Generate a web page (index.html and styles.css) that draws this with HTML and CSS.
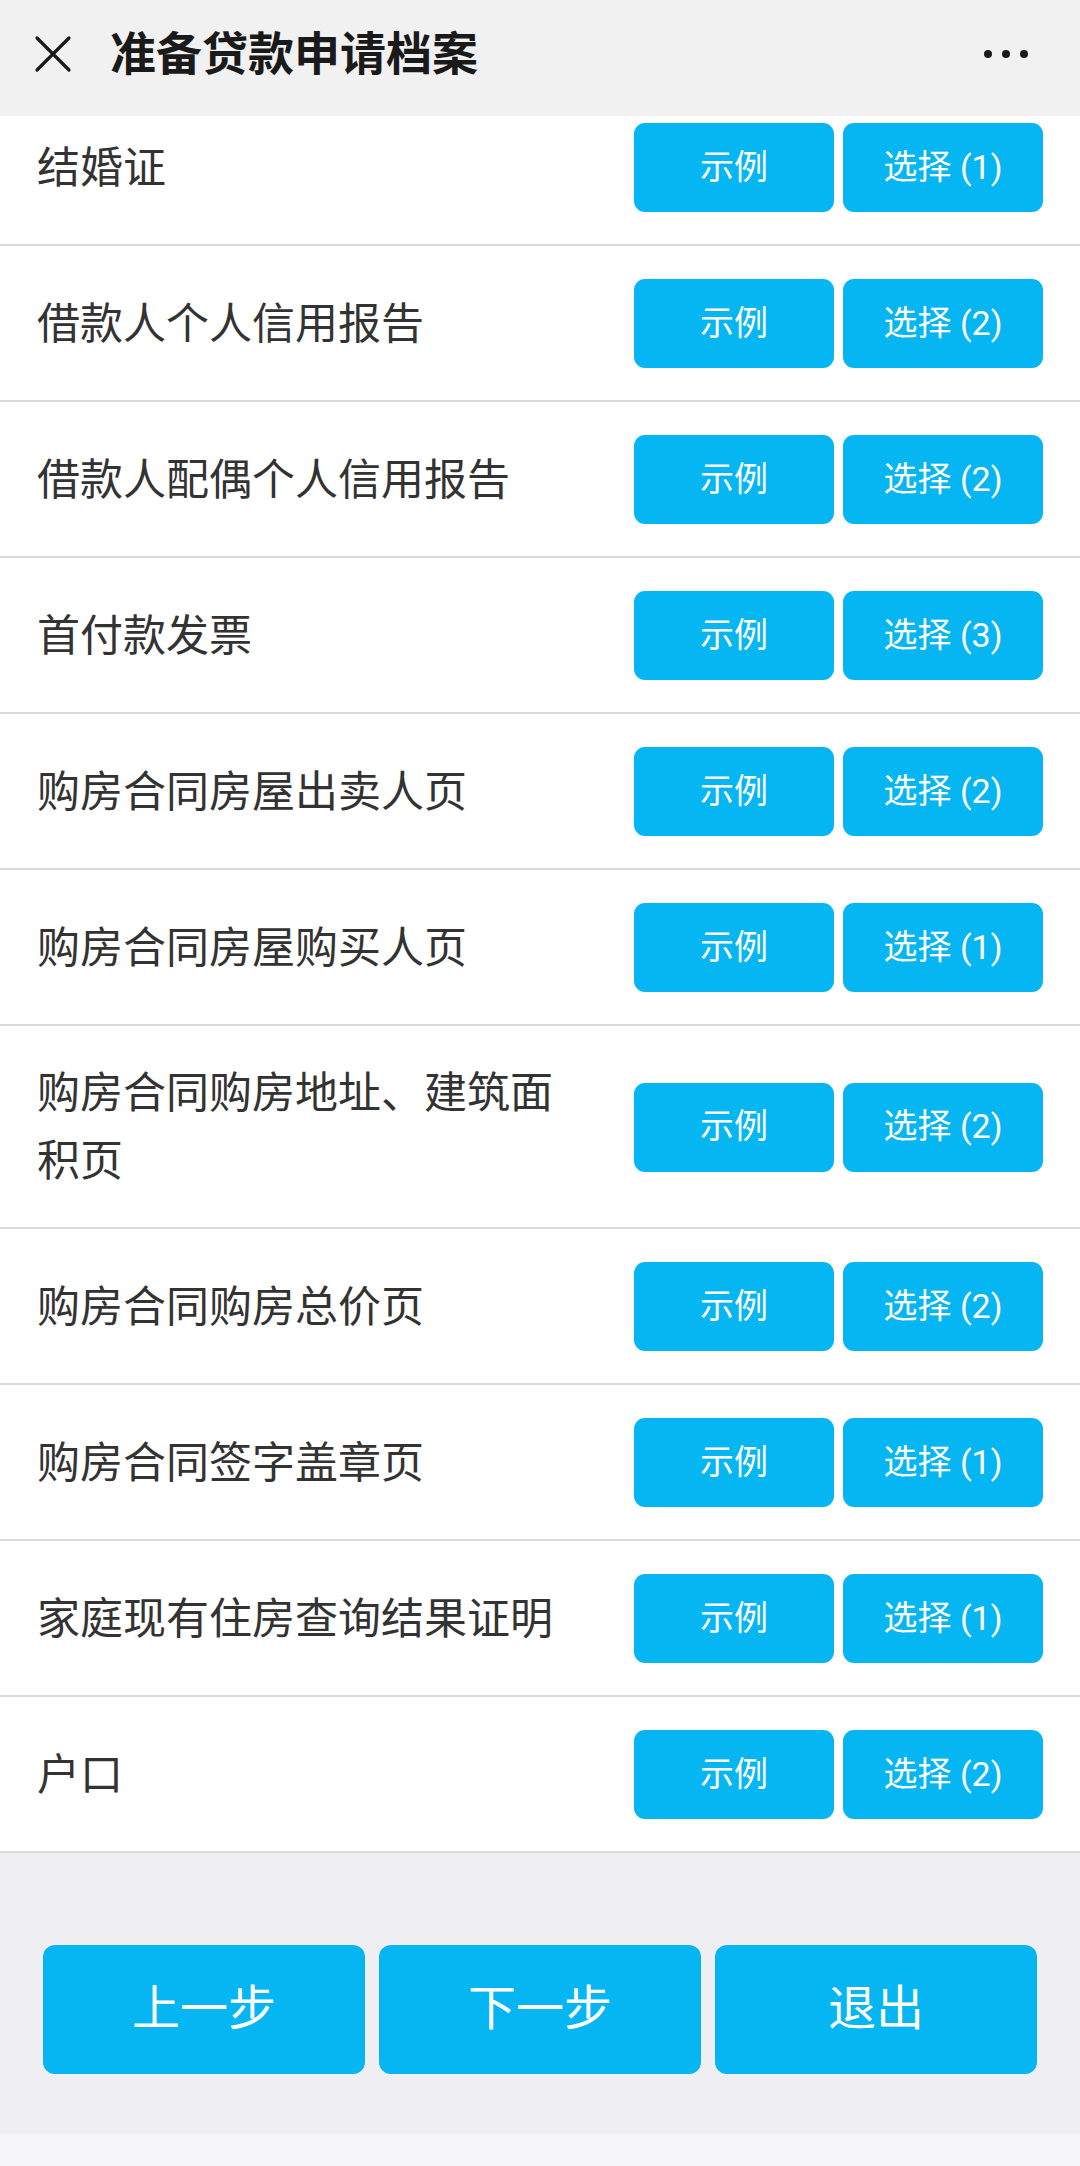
FILE: index.html
```html
<!DOCTYPE html>
<html lang="zh-CN">
<head>
<meta charset="utf-8">
<title>准备贷款申请档案</title>
<link rel="stylesheet" href="styles.css">
</head>
<body>
<div class="page">
  <header class="nav">
    <svg class="close" viewBox="0 0 40 40" width="40" height="40" aria-hidden="true">
      <path d="M4 4 L36 36 M36 4 L4 36" stroke="#1a1a1a" stroke-width="3.2" stroke-linecap="round" fill="none"/>
    </svg>
    <h1 class="title">准备贷款申请档案</h1>
    <div class="more"><span></span><span></span><span></span></div>
  </header>

  <main class="viewport">
    <div class="list">
      <div class="row"><div class="label">结婚证</div><div class="btns"><button class="btn">示例</button><button class="btn">选择 (1)</button></div></div>
      <div class="row"><div class="label">借款人个人信用报告</div><div class="btns"><button class="btn">示例</button><button class="btn">选择 (2)</button></div></div>
      <div class="row"><div class="label">借款人配偶个人信用报告</div><div class="btns"><button class="btn">示例</button><button class="btn">选择 (2)</button></div></div>
      <div class="row"><div class="label">首付款发票</div><div class="btns"><button class="btn">示例</button><button class="btn">选择 (3)</button></div></div>
      <div class="row"><div class="label">购房合同房屋出卖人页</div><div class="btns"><button class="btn">示例</button><button class="btn">选择 (2)</button></div></div>
      <div class="row"><div class="label">购房合同房屋购买人页</div><div class="btns"><button class="btn">示例</button><button class="btn">选择 (1)</button></div></div>
      <div class="row"><div class="label">购房合同购房地址、建筑面积页</div><div class="btns"><button class="btn">示例</button><button class="btn">选择 (2)</button></div></div>
      <div class="row"><div class="label">购房合同购房总价页</div><div class="btns"><button class="btn">示例</button><button class="btn">选择 (2)</button></div></div>
      <div class="row"><div class="label">购房合同签字盖章页</div><div class="btns"><button class="btn">示例</button><button class="btn">选择 (1)</button></div></div>
      <div class="row"><div class="label">家庭现有住房查询结果证明</div><div class="btns"><button class="btn">示例</button><button class="btn">选择 (1)</button></div></div>
      <div class="row"><div class="label">户口</div><div class="btns"><button class="btn">示例</button><button class="btn">选择 (2)</button></div></div>
    </div>
  </main>

  <footer class="actions">
    <button class="action">上一步</button>
    <button class="action">下一步</button>
    <button class="action">退出</button>
  </footer>
  <div class="strip"></div>
</div>
</body>
</html>
```

FILE: styles.css
```css
* { box-sizing: border-box; }
html, body {
  margin: 0;
  padding: 0;
  background: #f6f6f8;
  font-family: Roboto, "Noto Sans CJK SC", "Noto Sans", sans-serif;
}
.page {
  width: 1080px;
  height: 2166px;
  display: flex;
  flex-direction: column;
  overflow: hidden;
}
.nav {
  height: 116px;
  flex: 0 0 116px;
  background: #f1f1f1;
  display: flex;
  align-items: center;
  padding: 0 52px 8px 33px;
}
.close {
  width: 40px;
  height: 40px;
  flex: 0 0 40px;
}
.title {
  margin: 0 0 0 37px;
  font-size: 46px;
  font-weight: 700;
  color: #1a1a1a;
  letter-spacing: 0;
  line-height: 1;
}
.more {
  margin-left: auto;
  display: flex;
  gap: 10px;
}
.more span {
  width: 8px;
  height: 8px;
  border-radius: 50%;
  background: #1a1a1a;
}
.viewport {
  height: 1737px;
  flex: 0 0 1737px;
  overflow: hidden;
  background: #fff;
}
.list {
  margin-top: -26px;
}
.row {
  display: flex;
  align-items: center;
  padding: 33px 37px 32px 37px;
  border-bottom: 2px solid #dadada;
  background: #fff;
}
.label {
  width: 540px;
  font-size: 43px;
  line-height: 68px;
  color: #333;
}
.btns {
  margin-left: auto;
  display: flex;
  gap: 9px;
}
.btn {
  width: 200px;
  height: 89px;
  border: none;
  border-radius: 11px;
  background: #06b6f2;
  color: #fff;
  font-family: Roboto, "Noto Sans CJK SC", sans-serif;
  font-size: 34px;
  line-height: 1;
  padding: 0 0 2px 0;
}
.actions {
  height: 281px;
  flex: 0 0 281px;
  background: #efeff3;
  display: flex;
  gap: 14px;
  padding: 92px 43px 60px 43px;
}
.action {
  flex: 1;
  height: 129px;
  border: none;
  border-radius: 12px;
  background: #06b6f2;
  color: #fff;
  font-family: Roboto, "Noto Sans CJK SC", sans-serif;
  font-size: 48px;
  line-height: 1;
  padding: 0 0 2px 0;
}
.strip {
  flex: 1;
  background: #f6f6f8;
}
```
